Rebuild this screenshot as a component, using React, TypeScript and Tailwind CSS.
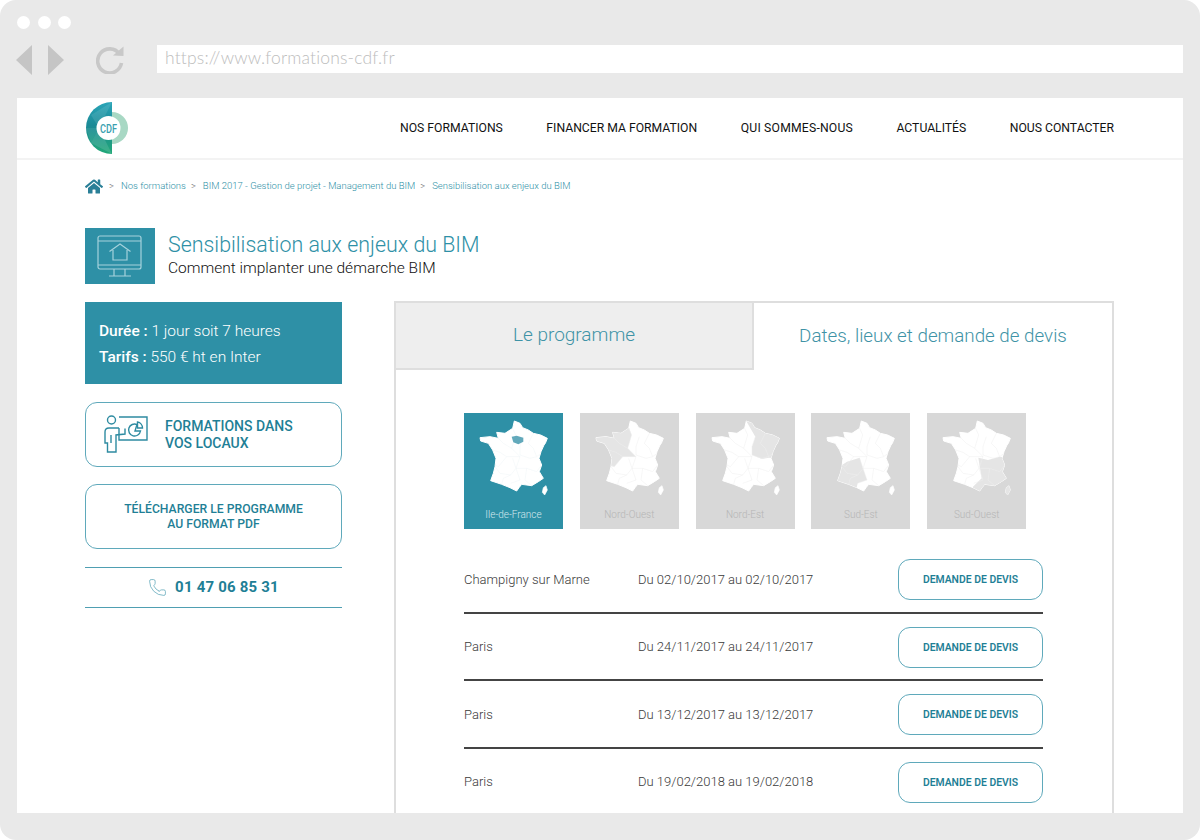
import { Phone } from "lucide-react";
import { FaHome } from "react-icons/fa";

const outline =
  "M133 18 L150 25 L158 38 L175 45 L190 55 L212 60 L232 70 L226 85 L222 90 L213 110 L207 130 L215 150 L208 170 L220 190 L205 200 L185 212 L155 208 L147 218 L140 228 L120 218 L95 208 L62 197 L70 175 L75 155 L78 130 L68 105 L55 85 L32 78 L30 68 L60 65 L85 70 L80 52 L105 55 L128 40 Z";
const corsica = "M228 212 L232 225 L224 240 L217 232 L220 218 Z";
const lines = [
  "M128 40 L137 60 L125 100 L150 125",
  "M85 70 L100 85 L125 100",
  "M68 105 L90 112 L110 125",
  "M150 125 L110 125 L85 155 L75 150",
  "M160 65 L150 95 L150 120 L180 130 L200 125 L213 115",
  "M190 55 L175 85 L190 100 L200 125",
  "M128 130 L138 160 L150 195 L122 205",
  "M150 125 L138 160 L170 160 L200 170 L215 150",
  "M75 155 L90 175 L122 180 L138 160",
  "M170 160 L165 195 L185 212",
  "M95 208 L100 190 L122 180",
];

const regions: Record<string, string> = {
  ne: "M128 10 L250 50 L240 130 L200 128 L180 132 L150 120 L150 95 L160 65 Z",
  no: "M20 60 L80 50 L128 35 L137 60 L125 100 L150 125 L110 125 L85 155 L60 150 L50 90 L20 80 Z",
  so: "M50 150 L75 150 L90 140 L128 128 L138 160 L150 195 L122 205 L115 235 L50 235 Z",
  se: "M136 128 L165 135 L200 125 L240 130 L240 250 L120 250 L120 215 L146 190 L141 160 Z",
};

function FranceMap({ region, active }: { region?: string; active?: boolean }) {
  const id = `clip-${region ?? "idf"}`;
  return (
    <svg viewBox="0 0 270 270" className="w-[90px] h-[90px] ml-[6px] mt-[2px] block">
      <defs>
        <clipPath id={id}>
          <path d={outline} />
          <path d={corsica} />
        </clipPath>
      </defs>
      <path d={outline} fill="#ffffff" stroke="#ffffff" strokeWidth="3" strokeLinejoin="round" />
      <path d={corsica} fill="#ffffff" stroke="#ffffff" strokeWidth="2" strokeLinejoin="round" />
      {region && <path d={regions[region]} fill="#e5e5e5" clipPath={`url(#${id})`} />}
      <g
        clipPath={`url(#${id})`}
        fill="none"
        stroke={active ? "#eef5f7" : "#efefef"}
        strokeWidth="1.5"
        strokeLinejoin="round"
      >
        {lines.map((d) => (
          <path key={d} d={d} />
        ))}
      </g>
      {active && (
        <path d="M125 65 L140 62 L160 68 L160 80 L145 88 L130 82 Z" fill="#62a9bb" />
      )}
    </svg>
  );
}

function Tile({ label, region, active }: { label: string; region?: string; active?: boolean }) {
  return (
    <div
      className={`w-[99px] h-[115.5px] flex flex-col ${active ? "bg-[#2e90a6] text-[#d5e9ee]" : "bg-[#d8d8d8] text-[#b5b5b5]"}`}
    >
      <FranceMap region={region} active={active} />
      <div className="text-center text-[10px] font-light mt-[3px] leading-[14px]">{label}</div>
    </div>
  );
}

function Row({ city, dates, last }: { city: string; dates: string; last?: boolean }) {
  return (
    <div
      className={`h-[67.6px] flex items-center shrink-0 text-[13px] font-light text-[#3a3a3a] ${last ? "pb-[2px]" : "border-b-[2px] border-[#444]"}`}
    >
      <div className="w-[174px] mt-[1px]">{city}</div>
      <div className="flex-1 mt-[1px]">{dates}</div>
      <div className="mt-[2px] w-[145px] h-[41px] rounded-[12px] border border-[#5fa9bb] flex items-center justify-center text-[10.4px] font-semibold text-[#1f7f96]">
        DEMANDE DE DEVIS
      </div>
    </div>
  );
}

function Logo() {
  return (
    <svg viewBox="0 0 44 54" className="w-[44px] h-[54px] block">
      <defs>
        <linearGradient id="lg" x1="0.6" y1="0" x2="0.6" y2="1">
          <stop offset="0" stopColor="#2aa5b8" />
          <stop offset="0.45" stopColor="#1b8a96" />
          <stop offset="1" stopColor="#21a877" />
        </linearGradient>
      </defs>
      <path d="M27 1 A26 26 0 0 0 27 53 Z" fill="url(#lg)" />
      <path d="M27 1 L6 14 L14 27 Z" fill="#ffffff" opacity="0.1" />
      <path d="M1 27 L14 27 L6 42 Z" fill="#ffffff" opacity="0.08" />
      <path d="M14 27 L27 53 L6 42 Z" fill="#ffffff" opacity="0.12" />
      <path d="M27 11 A16 16 0 0 1 27 43 Z" fill="#a8d8c4" />
      <circle cx="23.5" cy="27" r="12" fill="#ffffff" />
      <text
        x="23.5"
        y="31.5"
        textAnchor="middle"
        fontSize="12"
        fontWeight="500"
        fill="#3a9fb0"
        textLength="17"
        lengthAdjust="spacingAndGlyphs"
      >
        CDF
      </text>
    </svg>
  );
}

function PresenterIcon() {
  return (
    <svg viewBox="0 0 46 38" className="w-[46px] h-[38px] block" fill="none" stroke="#2e8ba1" strokeWidth="1.4">
      <circle cx="7.5" cy="5" r="4" />
      <path d="M15 2 H43 V25 H15 V13" />
      <path d="M15 13 H5 Q1 13 1 17 V28 H3.5 V37 H12 V20 L21 19 V13.5" />
      <path d="M7 20 V28" />
      <path d="M33 9.5 A6 6 0 1 0 36.5 16 H31 Z" />
      <path d="M33.5 7 A6 6 0 0 1 38.5 13 H33.5 Z" />
    </svg>
  );
}

function ScreenIcon() {
  return (
    <svg viewBox="0 0 46 42" className="w-[46px] h-[42px] block" fill="none" stroke="#a5d2dc" strokeWidth="1.2">
      <rect x="1" y="1" width="43" height="33" rx="2" />
      <path d="M1 6 H44 M1 30 H44" />
      <path d="M17 34 V40.5 M28 34 V40.5 M12 41 H34" />
      <path d="M12.5 16.5 L23 9 L33.5 16.5 M16 15 V25 H30 V15" />
    </svg>
  );
}

export default function App() {
  return (
    <div className="w-[1200px] h-[840px] bg-white overflow-hidden font-['Roboto',sans-serif]">
      <div className="w-full h-full bg-[#e9e9e9] rounded-[16px] px-[17px] flex flex-col">
        {/* browser chrome */}
        <div className="h-[98px] shrink-0">
          <div className="flex gap-[7.5px] pt-[16px]">
            <span className="w-[13px] h-[13px] rounded-full bg-white" />
            <span className="w-[13px] h-[13px] rounded-full bg-white" />
            <span className="w-[13px] h-[13px] rounded-full bg-white" />
          </div>
          <div className="flex items-start mt-[16px] h-[30px]">
            <svg viewBox="0 0 48 30" className="w-[48px] h-[30px] -ml-[1px] shrink-0">
              <path d="M16 0 V30 L0 15 Z M32 0 L48 15 L32 30 Z" fill="#c5c5c5" />
            </svg>
            <svg viewBox="0 0 28 28" className="w-[28px] h-[28px] mt-[1px] ml-[32px] shrink-0" fill="none">
              <path d="M23.5 8 A12 12 0 1 0 25.5 17" stroke="#c8c8c8" strokeWidth="3.6" />
              <path d="M17 9.5 L27.5 10 L27.5 0.5 Z" fill="#c8c8c8" />
            </svg>
            <div className="ml-[33px] flex-1 h-[28px] bg-white flex items-center pl-[8px] pb-[2px] font-['Lato',sans-serif] font-light text-[17.5px] tracking-[0.17px] text-[#bdbdbd]">
              https://www.formations-cdf.fr
            </div>
          </div>
        </div>

        {/* page */}
        <div className="h-[715px] bg-white overflow-hidden shrink-0">
          <nav className="h-[62px] border-b-[2px] border-[#f3f3f3] flex items-center pl-[68px] pr-[69px]">
            <Logo />
            <div className="ml-auto flex gap-[43.5px] text-[12.2px] text-[#111]">
              <span>NOS FORMATIONS</span>
              <span>FINANCER MA FORMATION</span>
              <span className="tracking-[0.2px]">QUI SOMMES-NOUS</span>
              <span>ACTUALITÉS</span>
              <span>NOUS CONTACTER</span>
            </div>
          </nav>

          <div className="pl-[68px] pr-[69px]">
            <div className="flex items-center h-[18px] mt-[17px] text-[9.5px] font-light text-[#2e90a6]">
              <FaHome className="w-[18px] h-[17px] text-[#2a7f97]" />
              <span className="ml-[6px] text-[#666]">&gt;</span>
              <span className="ml-[7px]">Nos formations</span>
              <span className="ml-[5px] text-[#666]">&gt;</span>
              <span className="ml-[7px]">BIM 2017 - Gestion de projet - Management du BIM</span>
              <span className="ml-[5px] text-[#666]">&gt;</span>
              <span className="ml-[7px]">Sensibilisation aux enjeux du BIM</span>
            </div>

            <div className="flex items-center mt-[33px] h-[56px]">
              <div className="w-[70px] h-[56px] bg-[#2e90a6] flex items-center justify-center">
                <ScreenIcon />
              </div>
              <div className="ml-[13px] mb-[2px]">
                <div className="text-[21.4px] font-light text-[#2e90a6] leading-[26px]">
                  Sensibilisation aux enjeux du BIM
                </div>
                <div className="text-[15.5px] font-light text-[#111] leading-[20px]">
                  Comment implanter une démarche BIM
                </div>
              </div>
            </div>

            <div className="flex mt-[17px]">
              <div className="w-[257px] shrink-0 pt-[1px]">
                <div className="h-[82px] bg-[#2e90a6] text-white text-[15.5px] font-light flex flex-col justify-center gap-[6px] pl-[14px] pt-[1px]">
                  <div className="leading-[20px]">
                    <span className="font-medium">Durée :</span> 1 jour soit 7 heures
                  </div>
                  <div className="leading-[20px]">
                    <span className="font-medium">Tarifs :</span> 550 € ht en Inter
                  </div>
                </div>
                <div className="mt-[18px] h-[64.5px] rounded-[12px] border border-[#5fa9bb] flex items-center pl-[18px]">
                  <PresenterIcon />
                  <div className="ml-[15px] pt-[2px] text-[14px] font-medium leading-[17px] text-[#1f7f96]">
                    FORMATIONS DANS
                    <br />
                    VOS LOCAUX
                  </div>
                </div>
                <div className="mt-[17.5px] h-[65px] rounded-[12px] border border-[#5fa9bb] flex items-center justify-center text-center text-[12.2px] font-medium leading-[15px] text-[#1f7f96]">
                  <div className="pt-[1px]">
                    TÉLÉCHARGER LE PROGRAMME
                    <br />
                    AU FORMAT PDF
                  </div>
                </div>
                <div className="mt-[17.5px] h-[41px] border-y border-[#4f9fb2] flex items-center justify-center">
                  <Phone className="w-[19px] h-[19px] text-[#62a9bb]" strokeWidth={1} />
                  <span className="ml-[8px] text-[15px] font-bold tracking-[0.2px] text-[#1f7f96]">
                    01 47 06 85 31
                  </span>
                </div>
              </div>

              <div className="ml-[52px] w-[720px] h-[530px] border-2 border-b-0 border-[#dedede]">
                <div className="flex h-[67px]">
                  <div className="w-[358px] bg-[#eeeeee] border-r-2 border-b-2 border-[#dedede] flex items-center justify-center text-[19px] font-light text-[#3f93a6]">
                    Le programme
                  </div>
                  <div className="flex-1 flex items-center justify-center text-[18.8px] font-light text-[#3f93a6]">
                    Dates, lieux et demande de devis
                  </div>
                </div>
                <div className="pl-[68px] pr-[69px] pt-[43px]">
                  <div className="flex gap-[16.8px]">
                    <Tile label="Ile-de-France" active />
                    <Tile label="Nord-Ouest" region="no" />
                    <Tile label="Nord-Est" region="ne" />
                    <Tile label="Sud-Est" region="so" />
                    <Tile label="Sud-Ouest" region="se" />
                  </div>
                  <div className="mt-[17.5px] flex flex-col">
                    <Row city="Champigny sur Marne" dates="Du 02/10/2017 au 02/10/2017" />
                    <Row city="Paris" dates="Du 24/11/2017 au 24/11/2017" />
                    <Row city="Paris" dates="Du 13/12/2017 au 13/12/2017" />
                    <Row city="Paris" dates="Du 19/02/2018 au 19/02/2018" last />
                  </div>
                </div>
              </div>
            </div>
          </div>
        </div>
      </div>
    </div>
  );
}
